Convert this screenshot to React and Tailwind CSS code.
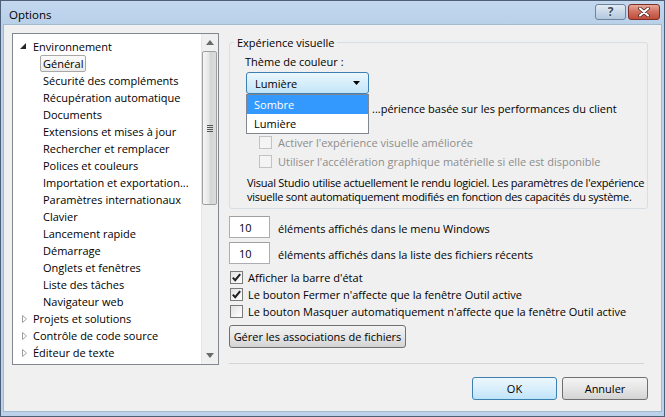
import React from 'react'

const enfants = [
    'Général',
    'Sécurité des compléments',
    'Récupération automatique',
    'Documents',
    'Extensions et mises à jour',
    'Rechercher et remplacer',
    'Polices et couleurs',
    'Importation et exportation...',
    'Paramètres internationaux',
    'Clavier',
    'Lancement rapide',
    'Démarrage',
    'Onglets et fenêtres',
    'Liste des tâches',
    'Navigateur web',
];

const fermes = ['Projets et solutions', 'Contrôle de code source', 'Éditeur de texte'];

// case à cocher façon Windows 7
function Case({ checked, disabled }) {
    return (
        <span className={`w-[13px] h-[13px] shrink-0 border flex items-center justify-center ${disabled ? 'border-[#c3c3c3] bg-[#f4f4f4]' : 'border-[#7a7a7a] bg-gradient-to-br from-[#e2e2e2] to-white'}`}>
            {checked && (
                <svg width="11" height="11" viewBox="0 0 11 11">
                    <path d="M1.8 5.6 L4.2 8.2 L9.2 2.2" fill="none" stroke="#1e1e1e" strokeWidth="2" />
                </svg>
            )}
        </span>
    );
}

function BarreDefilement() {
    return (
        <div className="w-[17px] bg-[#f0f0f0] border-l border-[#e6e6e6] flex flex-col">
            <div className="h-[17px] flex items-center justify-center">
                <svg width="8" height="5" viewBox="0 0 8 5"><path d="M0 5 L4 0 L8 5 Z" fill="#6a6a6a" /></svg>
            </div>
            <div className="h-[154px] mr-[1px] border border-[#a0a0a0] rounded-[2px] bg-[linear-gradient(to_right,#f6f6f6,#e6e6e6_45%,#d4d4d4_55%,#dcdcdc)] flex flex-col items-center justify-center gap-[1px]">
                <span className="w-[6px] h-[1px] bg-[#555]"></span>
                <span className="w-[6px] h-[1px] bg-[#555]"></span>
                <span className="w-[6px] h-[1px] bg-[#555]"></span>
                <span className="w-[6px] h-[1px] bg-[#555]"></span>
            </div>
            <div className="flex-1"></div>
            <div className="h-[17px] flex items-center justify-center">
                <svg width="8" height="5" viewBox="0 0 8 5"><path d="M0 0 L8 0 L4 5 Z" fill="#6a6a6a" /></svg>
            </div>
        </div>
    );
}

function Arbre() {
    return (
        <div className="w-[207px] h-[332px] shrink-0 border border-[#828790] bg-white flex overflow-hidden">
            <div className="flex-1 pt-[4px] overflow-hidden">
                <div className="h-[17px] flex items-center pl-[7px]">
                    <span className="w-[13px] flex items-center">
                        <svg width="7" height="7" viewBox="0 0 7 7"><path d="M6 0 L6 6 L0 6 Z" fill="#262626" /></svg>
                    </span>
                    <span>Environnement</span>
                </div>
                {enfants.map((e, i) => (
                    <div key={e} className="h-[17px] flex items-center pl-[27px]">
                        <span className={`h-[17px] leading-[15px] px-[2px] border rounded-[2px] ${i === 0 ? 'border-[#a8a8a8] bg-gradient-to-b from-[#fcfcfc] to-[#ebebeb]' : 'border-transparent'}`}>{e}</span>
                    </div>
                ))}
                {fermes.map(f => (
                    <div key={f} className="h-[17px] flex items-center pl-[9px]">
                        <span className="w-[11px] flex items-center">
                            <svg width="5" height="8" viewBox="0 0 5 8"><path d="M0.5 0.5 L4.5 4 L0.5 7.5 Z" fill="none" stroke="#a0a0a0" /></svg>
                        </span>
                        <span>{f}</span>
                    </div>
                ))}
            </div>
            <BarreDefilement />
        </div>
    );
}

function Bouton({ children, primaire, className = '' }) {
    return (
        <button className={`h-[23px] border rounded-[3px] flex items-center justify-center ${primaire ? 'border-[#3c7fb1] bg-gradient-to-b from-[#ecf7fd] via-[#d9effc] to-[#bee4f8]' : 'border-[#707070] bg-gradient-to-b from-[#f3f3f3] via-[#e6e6e6] to-[#d3d3d3]'} ${className}`}>
            {children}
        </button>
    );
}

export default function App() {
    return (
        <div className="w-[665px] h-[417px] border border-[#4e6077] bg-[#bcd2ea] flex flex-col overflow-hidden font-['Open_Sans',sans-serif] text-[11px] leading-[15px] text-black">
            {/* barre de titre */}
            <div className="h-[23px] flex justify-between items-start pl-[8px] pr-[4px] pt-[3px] bg-gradient-to-b from-[#c3d8ef] to-[#b9d0e9]">
                <span className="text-[11.5px] mt-[3px]">Options</span>
                <div className="flex gap-[2px]">
                    <div className="w-[31px] h-[16px] border border-[#6f839d] rounded-[3px] bg-gradient-to-b from-[#e3ebf4] via-[#c9d8e8] to-[#b3c8de] flex items-center justify-center">
                        <span className="font-bold text-[12px] leading-[12px] text-[#3b4a5e] [text-shadow:0_0_2px_#fff]">?</span>
                    </div>
                    <div className="w-[32px] h-[16px] border border-[#7d2f27] rounded-[3px] bg-gradient-to-b from-[#e7a899] via-[#d06e5e] to-[#c24b3a] flex items-center justify-center">
                        <svg width="12" height="10" viewBox="0 0 12 10">
                            <path d="M2 1.5 L10 8.5 M10 1.5 L2 8.5" stroke="#3a1a16" strokeWidth="3.6" strokeLinecap="round" />
                            <path d="M2 1.5 L10 8.5 M10 1.5 L2 8.5" stroke="#fff" strokeWidth="2.2" strokeLinecap="round" />
                        </svg>
                    </div>
                </div>
            </div>

            {/* zone client */}
            <div className="flex-1 mx-[2px] mb-[4px] border border-[#a3b9d0] bg-[#f0f0f0] flex pl-[8px] pt-[8px]">
                <Arbre />

                <div className="flex-1 min-w-0 ml-[10px] flex flex-col">
                    <fieldset className="mt-[2px] mr-[13px] border border-[#d5dfe5] rounded-[3px] p-0 pb-[4px] min-w-0">
                        <legend className="ml-[4px] px-[3px]">Expérience visuelle</legend>
                        <div className="pl-[15px] mt-[4px]">Thème de couleur :</div>
                        <div className="relative ml-[16px] mt-[3px] w-[123px]">
                            <div className="h-[22px] border border-[#3c7fb1] rounded-[3px] bg-gradient-to-b from-[#ecf7fd] to-[#c2e5f8] flex items-center justify-between pl-[8px] pr-[8px]">
                                <span>Lumière</span>
                                <svg width="7" height="4" viewBox="0 0 7 4"><path d="M0 0 L7 0 L3.5 4 Z" fill="#000" /></svg>
                            </div>
                            <div className="absolute top-full left-0 w-[123px] border border-[#828790] bg-white z-10">
                                <div className="h-[19px] flex items-center pl-[7px] bg-[#3399ff] text-white">Sombre</div>
                                <div className="h-[19px] flex items-center pl-[7px]">Lumière</div>
                            </div>
                        </div>
                        <div className="h-[17px] mt-[6px] flex items-center pl-[29px] gap-[5px]">
                            <Case />
                            <span className="ml-[95px]">...périence basée sur les performances du client</span>
                        </div>
                        <div className="mt-[16px] h-[19px] flex items-center pl-[29px] gap-[6px] text-[#8d8d8d]">
                            <Case disabled />
                            <span>Activer l'expérience visuelle améliorée</span>
                        </div>
                        <div className="h-[19px] flex items-center pl-[29px] gap-[6px] text-[#8d8d8d]">
                            <Case disabled />
                            <span>Utiliser l'accélération graphique matérielle si elle est disponible</span>
                        </div>
                        <p className="mt-[5px] pl-[17px] leading-[14px] whitespace-nowrap tracking-[-0.25px]">
                            Visual Studio utilise actuellement le rendu logiciel. Les paramètres de l'expérience<br />
                            visuelle sont automatiquement modifiés en fonction des capacités du système.
                        </p>
                    </fieldset>

                    <div className="mt-[7px] flex flex-col gap-[4px]">
                        <div className="flex items-center gap-[8px]">
                            <div className="w-[41px] h-[22px] border border-[#abadb3] border-t-[#a0a0a0] bg-white flex items-center pl-[9px]">10</div>
                            <span className="mt-[2px]">éléments affichés dans le menu Windows</span>
                        </div>
                        <div className="flex items-center gap-[8px]">
                            <div className="w-[41px] h-[22px] border border-[#abadb3] border-t-[#a0a0a0] bg-white flex items-center pl-[9px]">10</div>
                            <span className="mt-[2px]">éléments affichés dans la liste des fichiers récents</span>
                        </div>
                    </div>

                    <div className="mt-[5px] flex flex-col">
                        <div className="h-[17px] flex items-center gap-[5px] pl-[1px]">
                            <Case checked />
                            <span>Afficher la barre d'état</span>
                        </div>
                        <div className="h-[17px] flex items-center gap-[5px] pl-[1px]">
                            <Case checked />
                            <span>Le bouton Fermer n'affecte que la fenêtre Outil active</span>
                        </div>
                        <div className="h-[17px] flex items-center gap-[5px] pl-[1px]">
                            <Case />
                            <span>Le bouton Masquer automatiquement n'affecte que la fenêtre Outil active</span>
                        </div>
                    </div>

                    <Bouton className="mt-[5px] w-[177px] h-[22px]">Gérer les associations de fichiers</Bouton>

                    <div className="mt-[15px] mr-[17px] h-[1px] bg-[#d5d5d5]"></div>

                    <div className="mt-[13px] mr-[13px] flex justify-end gap-[5px]">
                        <Bouton primaire className="w-[85px]">OK</Bouton>
                        <Bouton className="w-[86px]">Annuler</Bouton>
                    </div>
                </div>
            </div>
        </div>
    )
}
